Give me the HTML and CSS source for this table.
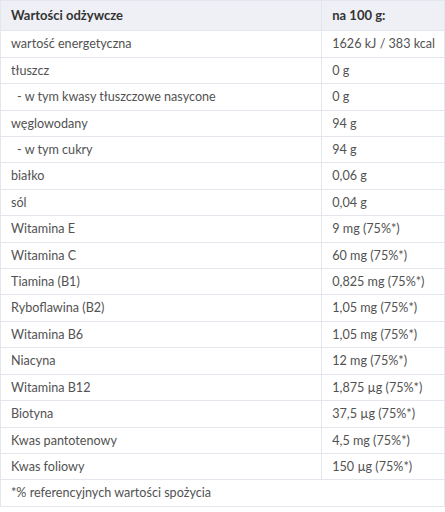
FILE: index.html
```html
<!DOCTYPE html>
<html lang="pl">
<head>
    <meta charset="UTF-8">
    <meta name="viewport" content="width=device-width, initial-scale=1.0">
    <title>Wartości odżywcze</title>
    <link rel="stylesheet" href="styles.css">
</head>
<body>
    <table class="nutrition">
        <thead>
            <tr>
                <th>Wartości odżywcze</th>
                <th class="value">na 100 g:</th>
            </tr>
        </thead>
        <tbody>
            <tr><td>wartość energetyczna</td><td class="value">1626 kJ / 383 kcal</td></tr>
            <tr><td>tłuszcz</td><td class="value">0 g</td></tr>
            <tr class="sub"><td>- w tym kwasy tłuszczowe nasycone</td><td class="value">0 g</td></tr>
            <tr><td>węglowodany</td><td class="value">94 g</td></tr>
            <tr class="sub"><td>- w tym cukry</td><td class="value">94 g</td></tr>
            <tr><td>białko</td><td class="value">0,06 g</td></tr>
            <tr><td>sól</td><td class="value">0,04 g</td></tr>
            <tr><td>Witamina E</td><td class="value">9 mg (75%*)</td></tr>
            <tr><td>Witamina C</td><td class="value">60 mg (75%*)</td></tr>
            <tr><td>Tiamina (B1)</td><td class="value">0,825 mg (75%*)</td></tr>
            <tr><td>Ryboflawina (B2)</td><td class="value">1,05 mg (75%*)</td></tr>
            <tr><td>Witamina B6</td><td class="value">1,05 mg (75%*)</td></tr>
            <tr><td>Niacyna</td><td class="value">12 mg (75%*)</td></tr>
            <tr><td>Witamina B12</td><td class="value">1,875 µg (75%*)</td></tr>
            <tr><td>Biotyna</td><td class="value">37,5 µg (75%*)</td></tr>
            <tr><td>Kwas pantotenowy</td><td class="value">4,5 mg (75%*)</td></tr>
            <tr><td>Kwas foliowy</td><td class="value">150 µg (75%*)</td></tr>
            <tr><td colspan="2">*% referencyjnych wartości spożycia</td></tr>
        </tbody>
    </table>
</body>
</html>
```

FILE: styles.css
```css
body {
    margin: 0;
    padding: 0;
    background-color: #fff;
    font-family: 'Lato', 'Liberation Sans', sans-serif;
}

.nutrition {
    width: 445px;
    border-collapse: collapse;
    font-size: 12.6px;
    color: #525252;
}

.nutrition th,
.nutrition td {
    border: 1px solid #e3e7ed;
    padding: 5px 9px 5px 10px;
    line-height: 15.4px;
    text-align: left;
    white-space: nowrap;
}

.nutrition th {
    background-color: #eef0f5;
    color: #333;
    font-size: 13px;
    font-weight: bold;
    padding-top: 7px;
    padding-bottom: 7px;
}

.nutrition .value {
    width: 102px;
}

.nutrition tr.sub td {
    border-top: none;
}

.nutrition tr.sub td:first-child {
    padding-left: 16px;
}
```
